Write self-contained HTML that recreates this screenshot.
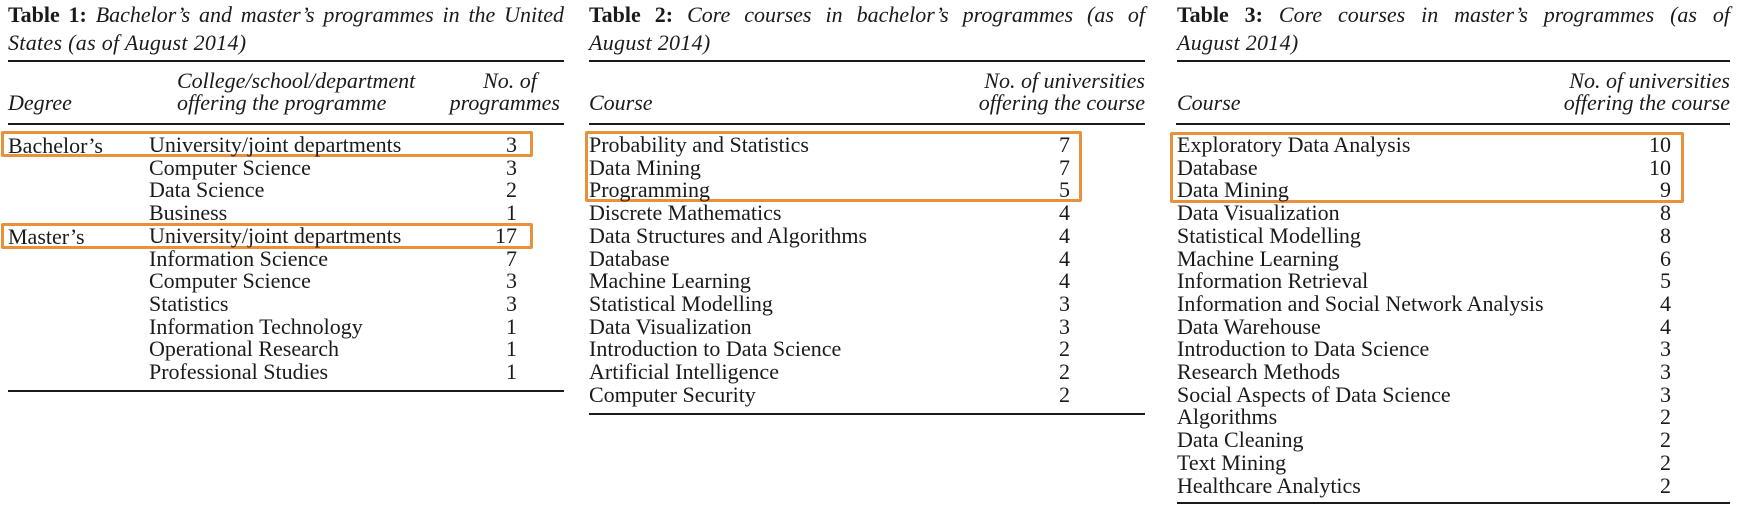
<!DOCTYPE html>
<html><head><meta charset="utf-8"><style>
body{margin:0;width:1741px;height:514px;background:#fff;position:relative;overflow:hidden;font-family:"Liberation Serif",serif;font-size:22px;color:#1a1a1a}
.a{position:absolute;white-space:nowrap;line-height:23px}
.r{text-align:right}
.i{font-style:italic}
.s{letter-spacing:0.3px}
.rule{position:absolute;height:2px;background:#1a1a1a}
.box{position:absolute;border:3px solid #e8913a;border-radius:2px;box-sizing:border-box}
.t{position:absolute;line-height:23px;white-space:nowrap;text-align:justify;text-align-last:justify}
</style></head><body>
<!-- Table 1 -->
<div class="t" style="left:8px;top:3px;width:556px"><b>Table 1:</b> <i>Bachelor’s and master’s programmes in the United</i></div>
<div class="a i s" style="left:8px;top:31px">States (as of August 2014)</div>
<div class="rule" style="left:8px;width:556px;top:60px"></div>
<div class="a i" style="left:177px;width:200px;text-align:center;top:69px">College/school/department</div>
<div class="a i" style="left:177px;width:200px;text-align:center;top:91px">offering the programme</div>
<div class="a i" style="left:8px;top:91px">Degree</div>
<div class="a i" style="left:450px;width:120px;text-align:center;top:69px">No. of</div>
<div class="a i r" style="right:1181px;top:91px">programmes</div>
<div class="rule" style="left:8px;width:556px;top:123px"></div>
<div class="box" style="left:1px;top:131px;width:532px;height:26px"></div>
<div class="box" style="left:1px;top:223px;width:532px;height:26px"></div>
<div class="a" style="left:8px;top:134px">Bachelor’s</div>
<div class="a" style="left:8px;top:225px">Master’s</div>
<div class="a" style="left:149px;top:134px;line-height:22.7px">University/joint departments<br>Computer Science<br>Data Science<br>Business<br>University/joint departments<br>Information Science<br>Computer Science<br>Statistics<br>Information Technology<br>Operational Research<br>Professional Studies</div>
<div class="a r" style="right:1224px;top:134px;line-height:22.7px">3<br>3<br>2<br>1<br>17<br>7<br>3<br>3<br>1<br>1<br>1</div>
<div class="rule" style="left:8px;width:556px;top:390px"></div>

<!-- Table 2 -->
<div class="t" style="left:589px;top:3px;width:556px"><b>Table 2:</b> <i>Core courses in bachelor’s programmes (as of</i></div>
<div class="a i s" style="left:589px;top:31px">August 2014)</div>
<div class="rule" style="left:589px;width:556px;top:60px"></div>
<div class="a i r" style="right:596px;top:69px">No. of universities</div>
<div class="a i r" style="right:596px;top:91px">offering the course</div>
<div class="a i" style="left:589px;top:91px">Course</div>
<div class="rule" style="left:589px;width:556px;top:123px"></div>
<div class="box" style="left:585px;top:131px;width:497px;height:71px"></div>
<div class="a" style="left:589px;top:134px;line-height:22.7px">Probability and Statistics<br>Data Mining<br>Programming<br>Discrete Mathematics<br>Data Structures and Algorithms<br>Database<br>Machine Learning<br>Statistical Modelling<br>Data Visualization<br>Introduction to Data Science<br>Artificial Intelligence<br>Computer Security</div>
<div class="a r" style="right:671px;top:134px;line-height:22.7px">7<br>7<br>5<br>4<br>4<br>4<br>4<br>3<br>3<br>2<br>2<br>2</div>
<div class="rule" style="left:589px;width:556px;top:413px"></div>

<!-- Table 3 -->
<div class="t" style="left:1177px;top:3px;width:553px"><b>Table 3:</b> <i>Core courses in master’s programmes (as of</i></div>
<div class="a i s" style="left:1177px;top:31px">August 2014)</div>
<div class="rule" style="left:1177px;width:553px;top:60px"></div>
<div class="a i r" style="right:11px;top:69px">No. of universities</div>
<div class="a i r" style="right:11px;top:91px">offering the course</div>
<div class="a i" style="left:1177px;top:91px">Course</div>
<div class="rule" style="left:1176px;width:554px;top:123px"></div>
<div class="box" style="left:1170px;top:132px;width:514px;height:71px"></div>
<div class="a" style="left:1177px;top:134px;line-height:22.7px">Exploratory Data Analysis<br>Database<br>Data Mining<br>Data Visualization<br>Statistical Modelling<br>Machine Learning<br>Information Retrieval<br>Information and Social Network Analysis<br>Data Warehouse<br>Introduction to Data Science<br>Research Methods<br>Social Aspects of Data Science<br>Algorithms<br>Data Cleaning<br>Text Mining<br>Healthcare Analytics</div>
<div class="a r" style="right:70px;top:134px;line-height:22.7px">10<br>10<br>9<br>8<br>8<br>6<br>5<br>4<br>4<br>3<br>3<br>3<br>2<br>2<br>2<br>2</div>
<div class="rule" style="left:1177px;width:553px;top:502px"></div>
</body></html>
